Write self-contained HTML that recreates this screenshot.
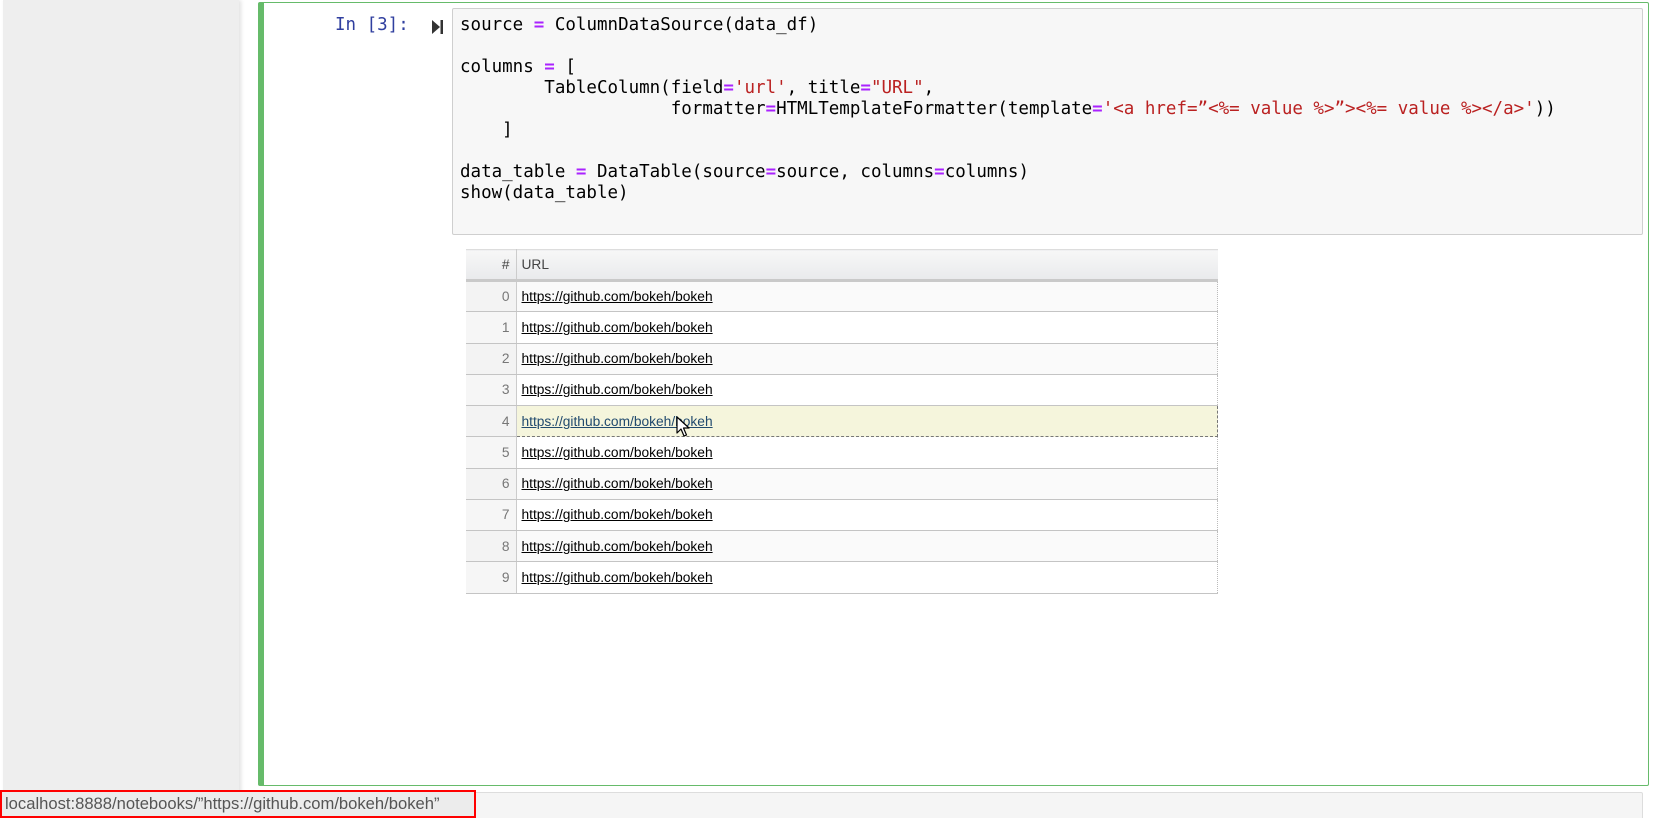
<!DOCTYPE html>
<html><head><meta charset="utf-8"><style>
*{margin:0;padding:0;box-sizing:border-box}
html,body{width:1660px;height:818px;overflow:hidden;background:#fff;position:relative;font-family:"Liberation Sans",sans-serif}
.side{position:absolute;left:3px;top:0;width:236px;height:818px;background:#eee;box-shadow:2px 0 4px rgba(0,0,0,.12)}
.cell{position:absolute;left:258px;top:2px;width:1391px;height:784px;border:1px solid #66bb6a;border-left:6px solid #66bb6a;border-radius:2px}
.prompt{position:absolute;left:335px;top:15px;font:17.5px/21px "DejaVu Sans Mono",monospace;color:#303f9f}
.run{position:absolute;left:432px;top:20px}
.code{position:absolute;left:452px;top:8px;width:1191px;height:227px;background:#f7f7f7;border:1px solid #cfcfcf;border-radius:2px;padding:6px 0 0 7px;font:17.5px/21px "DejaVu Sans Mono",monospace;color:#000;white-space:pre}
.o{color:#aa22ff;font-weight:bold}.s{color:#ba2121}
table{position:absolute;left:466px;top:249px;border-collapse:collapse;width:752px;font-size:13.75px;color:#000}
th{height:31px;background:linear-gradient(#f7f7f7,#e9eaec);border-bottom:3px solid #c9c9c9;font-weight:normal;color:#444;text-align:left;padding-left:5px;border-top:1px solid #ddd}
th.i{width:50px;text-align:right;padding-right:6px;border-right:1px solid #ccc}
td{height:31.25px;border-bottom:1px solid #c4c4c4;padding-left:5px;border-right:1px dotted #bbb}
td.i{text-align:right;padding-right:6px;color:#777;border-right:1px solid #ccc;background:#f6f6f6}
tr:nth-child(even) td{background:#fafafa}
tr:nth-child(even) td.i{background:#f3f3f3}
a{color:#000;text-decoration:underline}
tr.sel td.u{background:#f5f5dc;border:1px dashed #777}
tr.sel td.u a{color:#214a6e}
.status{position:absolute;left:0;top:792px;width:1643px;height:30px;background:#f5f5f5;border:1px solid #ddd;border-radius:2px}
.st{position:absolute;left:0;top:790px;height:28px;width:476px;background:#ececec;border:2px solid #f00;font-size:16.6px;color:#555;padding:2px 0 0 3px;white-space:nowrap;overflow:hidden}
</style></head><body>
<div class="side"></div>
<div class="cell"></div>
<div class="prompt">In [3]:</div>
<svg class="run" width="12" height="14" viewBox="0 0 12 14"><path d="M0 0L8 7L0 14Z" fill="#333"/><rect x="8.5" y="0" width="2.5" height="14" fill="#333"/></svg>
<div class="code">source <span class="o">=</span> ColumnDataSource(data_df)

columns <span class="o">=</span> [
        TableColumn(field<span class="o">=</span><span class="s">'url'</span>, title<span class="o">=</span><span class="s">"URL"</span>,
                    formatter<span class="o">=</span>HTMLTemplateFormatter(template<span class="o">=</span><span class="s">'&lt;a href=”&lt;%= value %&gt;”&gt;&lt;%= value %&gt;&lt;/a&gt;'</span>))
    ]

data_table <span class="o">=</span> DataTable(source<span class="o">=</span>source, columns<span class="o">=</span>columns)
show(data_table)</div>
<table>
<tr><th class="i">#</th><th>URL</th></tr>
<tr><td class="i">0</td><td class="u"><a>https://github.com/bokeh/bokeh</a></td></tr>
<tr><td class="i">1</td><td class="u"><a>https://github.com/bokeh/bokeh</a></td></tr>
<tr><td class="i">2</td><td class="u"><a>https://github.com/bokeh/bokeh</a></td></tr>
<tr><td class="i">3</td><td class="u"><a>https://github.com/bokeh/bokeh</a></td></tr>
<tr class="sel"><td class="i">4</td><td class="u"><a>https://github.com/bokeh/bokeh</a></td></tr>
<tr><td class="i">5</td><td class="u"><a>https://github.com/bokeh/bokeh</a></td></tr>
<tr><td class="i">6</td><td class="u"><a>https://github.com/bokeh/bokeh</a></td></tr>
<tr><td class="i">7</td><td class="u"><a>https://github.com/bokeh/bokeh</a></td></tr>
<tr><td class="i">8</td><td class="u"><a>https://github.com/bokeh/bokeh</a></td></tr>
<tr><td class="i">9</td><td class="u"><a>https://github.com/bokeh/bokeh</a></td></tr>
</table>
<svg style="position:absolute;left:676px;top:416px" width="14" height="22" viewBox="0 0 14 22"><path d="M1 1L1 17L5 13L8 20L10.5 19L7.5 12L13 12Z" fill="#fff" stroke="#000" stroke-width="1.2" stroke-linejoin="round"/></svg>
<div class="status"></div>
<div class="st">localhost:8888/notebooks/”https://github.com/bokeh/bokeh”</div>
</body></html>
